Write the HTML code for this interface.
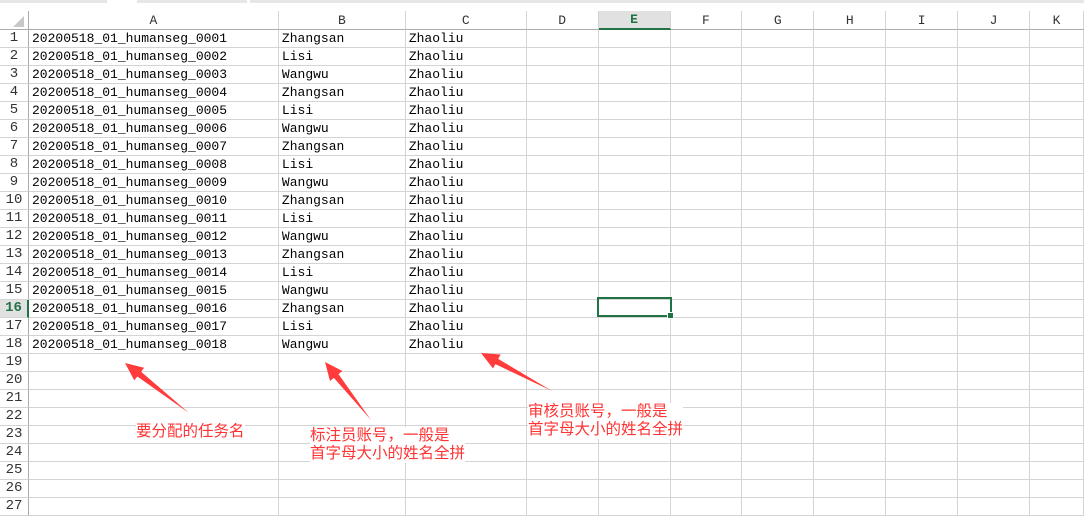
<!DOCTYPE html>
<html><head><meta charset="utf-8"><style>
body{margin:0;width:1084px;height:518px;overflow:hidden;background:#fff;position:relative;font-family:"Liberation Mono","Noto Sans CJK SC",monospace;}
table{position:absolute;left:0;top:11px;border-collapse:separate;border-spacing:0;table-layout:fixed;}
td{height:17px;padding:0;border-right:1px solid #d4d4d4;border-bottom:1px solid #d4d4d4;font-size:13px;line-height:17px;white-space:nowrap;overflow:hidden;color:#000;}
td.c{padding-left:3px;}
td.n{text-align:center;color:#333;font-size:14px;border-right:1px solid #ababab;}
tr.h td{text-align:center;color:#333;font-size:13px;border-bottom:1px solid #ababab;border-right:1px solid #d4d4d4;}
tr.h td.e{background:#e1e1e1;color:#217346;font-weight:bold;border-bottom:2px solid #217346;height:16px;}
td.sel{background:#e1e1e1;color:#217346;font-weight:bold;border-right:2px solid #217346;}
.top{position:absolute;top:0;height:3px;background:#e6e6e6;}
.note{position:absolute;background:#fff;color:#ff3333;font-family:"Liberation Sans","Noto Sans CJK SC",sans-serif;font-size:15.5px;line-height:18px;}
.selbox{position:absolute;left:597px;top:297px;width:71px;height:16px;border:2px solid #217346;}
.selbox:after{content:"";position:absolute;right:-4px;bottom:-4px;width:5px;height:5px;background:#217346;border:1px solid #fff;}
</style></head><body>
<div class="top" style="left:0;width:107px"></div>
<div class="top" style="left:137px;width:110px"></div>
<div class="top" style="left:250px;width:834px"></div>
<table>
<colgroup><col style="width:28px"><col style="width:250px"><col style="width:127px"><col style="width:121px"><col style="width:72px"><col style="width:72px"><col style="width:72px"><col style="width:72px"><col style="width:72px"><col style="width:72px"><col style="width:72px"><col style="width:54px"></colgroup>
<tr class="h"><td style="border-right:1px solid #ababab"><svg width="28" height="17" style="display:block"><polygon points="24,4 24,15 13,15" fill="#c8c8c8"/></svg></td><td>A</td><td>B</td><td>C</td><td>D</td><td class="e">E</td><td>F</td><td>G</td><td>H</td><td>I</td><td>J</td><td>K</td></tr>
<tr><td class="n">1</td><td class="c">20200518_01_humanseg_0001</td><td class="c">Zhangsan</td><td class="c">Zhaoliu</td><td></td><td></td><td></td><td></td><td></td><td></td><td></td><td></td></tr>
<tr><td class="n">2</td><td class="c">20200518_01_humanseg_0002</td><td class="c">Lisi</td><td class="c">Zhaoliu</td><td></td><td></td><td></td><td></td><td></td><td></td><td></td><td></td></tr>
<tr><td class="n">3</td><td class="c">20200518_01_humanseg_0003</td><td class="c">Wangwu</td><td class="c">Zhaoliu</td><td></td><td></td><td></td><td></td><td></td><td></td><td></td><td></td></tr>
<tr><td class="n">4</td><td class="c">20200518_01_humanseg_0004</td><td class="c">Zhangsan</td><td class="c">Zhaoliu</td><td></td><td></td><td></td><td></td><td></td><td></td><td></td><td></td></tr>
<tr><td class="n">5</td><td class="c">20200518_01_humanseg_0005</td><td class="c">Lisi</td><td class="c">Zhaoliu</td><td></td><td></td><td></td><td></td><td></td><td></td><td></td><td></td></tr>
<tr><td class="n">6</td><td class="c">20200518_01_humanseg_0006</td><td class="c">Wangwu</td><td class="c">Zhaoliu</td><td></td><td></td><td></td><td></td><td></td><td></td><td></td><td></td></tr>
<tr><td class="n">7</td><td class="c">20200518_01_humanseg_0007</td><td class="c">Zhangsan</td><td class="c">Zhaoliu</td><td></td><td></td><td></td><td></td><td></td><td></td><td></td><td></td></tr>
<tr><td class="n">8</td><td class="c">20200518_01_humanseg_0008</td><td class="c">Lisi</td><td class="c">Zhaoliu</td><td></td><td></td><td></td><td></td><td></td><td></td><td></td><td></td></tr>
<tr><td class="n">9</td><td class="c">20200518_01_humanseg_0009</td><td class="c">Wangwu</td><td class="c">Zhaoliu</td><td></td><td></td><td></td><td></td><td></td><td></td><td></td><td></td></tr>
<tr><td class="n">10</td><td class="c">20200518_01_humanseg_0010</td><td class="c">Zhangsan</td><td class="c">Zhaoliu</td><td></td><td></td><td></td><td></td><td></td><td></td><td></td><td></td></tr>
<tr><td class="n">11</td><td class="c">20200518_01_humanseg_0011</td><td class="c">Lisi</td><td class="c">Zhaoliu</td><td></td><td></td><td></td><td></td><td></td><td></td><td></td><td></td></tr>
<tr><td class="n">12</td><td class="c">20200518_01_humanseg_0012</td><td class="c">Wangwu</td><td class="c">Zhaoliu</td><td></td><td></td><td></td><td></td><td></td><td></td><td></td><td></td></tr>
<tr><td class="n">13</td><td class="c">20200518_01_humanseg_0013</td><td class="c">Zhangsan</td><td class="c">Zhaoliu</td><td></td><td></td><td></td><td></td><td></td><td></td><td></td><td></td></tr>
<tr><td class="n">14</td><td class="c">20200518_01_humanseg_0014</td><td class="c">Lisi</td><td class="c">Zhaoliu</td><td></td><td></td><td></td><td></td><td></td><td></td><td></td><td></td></tr>
<tr><td class="n">15</td><td class="c">20200518_01_humanseg_0015</td><td class="c">Wangwu</td><td class="c">Zhaoliu</td><td></td><td></td><td></td><td></td><td></td><td></td><td></td><td></td></tr>
<tr><td class="n sel">16</td><td class="c">20200518_01_humanseg_0016</td><td class="c">Zhangsan</td><td class="c">Zhaoliu</td><td></td><td></td><td></td><td></td><td></td><td></td><td></td><td></td></tr>
<tr><td class="n">17</td><td class="c">20200518_01_humanseg_0017</td><td class="c">Lisi</td><td class="c">Zhaoliu</td><td></td><td></td><td></td><td></td><td></td><td></td><td></td><td></td></tr>
<tr><td class="n">18</td><td class="c">20200518_01_humanseg_0018</td><td class="c">Wangwu</td><td class="c">Zhaoliu</td><td></td><td></td><td></td><td></td><td></td><td></td><td></td><td></td></tr>
<tr><td class="n">19</td><td></td><td></td><td></td><td></td><td></td><td></td><td></td><td></td><td></td><td></td><td></td></tr>
<tr><td class="n">20</td><td></td><td></td><td></td><td></td><td></td><td></td><td></td><td></td><td></td><td></td><td></td></tr>
<tr><td class="n">21</td><td></td><td></td><td></td><td></td><td></td><td></td><td></td><td></td><td></td><td></td><td></td></tr>
<tr><td class="n">22</td><td></td><td></td><td></td><td></td><td></td><td></td><td></td><td></td><td></td><td></td><td></td></tr>
<tr><td class="n">23</td><td></td><td></td><td></td><td></td><td></td><td></td><td></td><td></td><td></td><td></td><td></td></tr>
<tr><td class="n">24</td><td></td><td></td><td></td><td></td><td></td><td></td><td></td><td></td><td></td><td></td><td></td></tr>
<tr><td class="n">25</td><td></td><td></td><td></td><td></td><td></td><td></td><td></td><td></td><td></td><td></td><td></td></tr>
<tr><td class="n">26</td><td></td><td></td><td></td><td></td><td></td><td></td><td></td><td></td><td></td><td></td><td></td></tr>
<tr><td class="n">27</td><td></td><td></td><td></td><td></td><td></td><td></td><td></td><td></td><td></td><td></td><td></td></tr>
</table>
<div class="selbox"></div>
<svg style="position:absolute;left:0;top:0" width="1084" height="518">
<polygon fill="#ff3b3b" points="125,363 144.1,367.8 141.1,371.7 189,413 137.3,376.5 134.3,380.4"/>
<polygon fill="#ff3b3b" points="325,362 342.4,371 338.5,374.1 371,420 333.9,377.9 330,381"/>
<polygon fill="#ff3b3b" points="481,353 500.6,354.5 498.2,358.9 552,391 495.4,364.1 493,368.5"/>
</svg>
<div class="note" style="left:136px;top:423px;">要分配的任务名</div>
<div class="note" style="left:310px;top:427px;">标注员账号，一般是<br>首字母大小的姓名全拼</div>
<div class="note" style="left:528px;top:403px;">审核员账号，一般是<br>首字母大小的姓名全拼</div>
</body></html>
